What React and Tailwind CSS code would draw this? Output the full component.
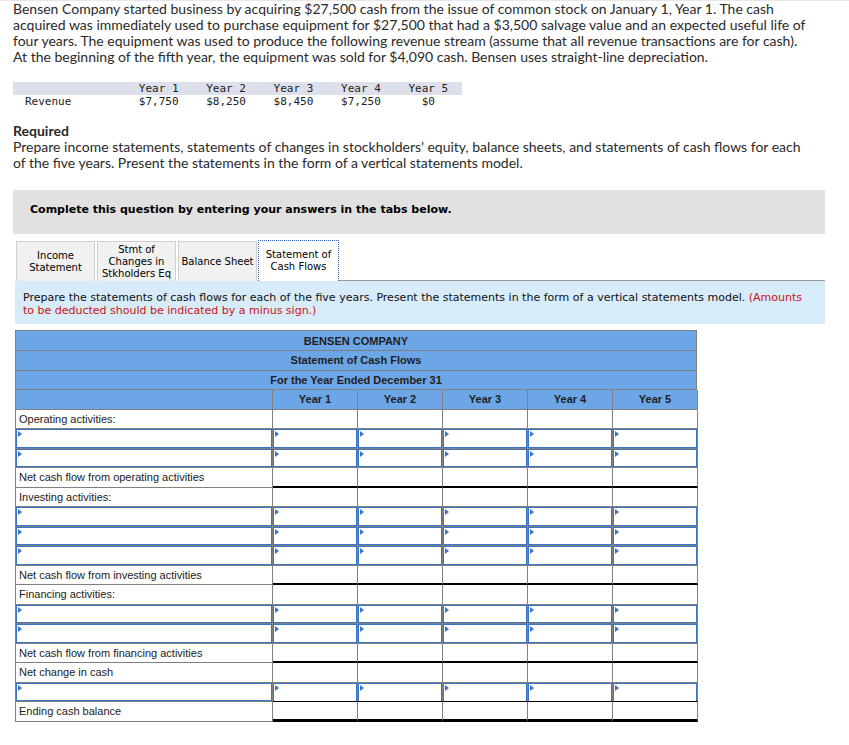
import React from "react";

const YEARS = ["Year 1", "Year 2", "Year 3", "Year 4", "Year 5"];

function Tri() {
  return (
    <span className="absolute left-[1px] top-[1px] w-0 h-0 border-y-[3px] border-y-transparent border-l-[4px] border-l-[#3b74c6]" />
  );
}

function InputBox({ extra = "" }) {
  return (
    <div className={`relative h-full border-[1.5px] border-[#3b74c6] ${extra}`}>
      <Tri />
    </div>
  );
}

const ROW = "grid grid-cols-[257px_repeat(5,85px)] h-[19.5px]";
const CELL = "border-r border-b border-[#808080] h-full";

function LabelRow({ label, total = null }) {
  return (
    <div className={ROW}>
      <div className={`${CELL} pl-[3px] flex items-center text-[11px] text-[#222]`}>{label}</div>
      {YEARS.map((y) => (
        <div
          key={y}
          className={
            total === "single"
              ? "border-r border-[#808080] border-b-2 border-b-black h-full"
              : total === "double"
              ? "border-r border-[#808080] border-b-[3px] border-b-black h-full"
              : CELL
          }
        />
      ))}
    </div>
  );
}

function InputRow({ blackBottom = false }) {
  return (
    <div className={ROW}>
      <div className={`${CELL} p-0`}>
        <InputBox />
      </div>
      {YEARS.map((y) => (
        <div
          key={y}
          className={
            blackBottom
              ? "border-r border-[#808080] border-b border-b-black h-full"
              : CELL
          }
        >
          <InputBox extra={blackBottom ? "border-b-0" : ""} />
        </div>
      ))}
    </div>
  );
}

export default function App() {
  return (
    <div className="w-[849px] min-h-[745px] bg-white border-t border-[#e6e6e6] text-[#222]">
      <div className="pl-[13px] pr-[20px]">
        <p className="text-[14px] leading-[16px] text-[#2a2a2a] font-['Lato',sans-serif]">
          Bensen Company started business by acquiring $27,500 cash from the issue of common stock on January 1, Year 1. The cash
          <br />
          acquired was immediately used to purchase equipment for $27,500 that had a $3,500 salvage value and an expected useful life of
          <br />
          four years. The equipment was used to produce the following revenue stream (assume that all revenue transactions are for cash).
          <br />
          At the beginning of the fifth year, the equipment was sold for $4,090 cash. Bensen uses straight-line depreciation.
        </p>

        <div className="mt-[17px] w-[449px] font-['DejaVu_Sans_Mono',monospace] text-[11px] leading-[13px] text-[#222]">
          <div className="grid grid-cols-[112px_repeat(5,1fr)] bg-[#dde0ea] h-[13px]">
            <div />
            {YEARS.map((y) => (
              <div key={y} className="text-center">{y}</div>
            ))}
          </div>
          <div className="grid grid-cols-[112px_repeat(5,1fr)] h-[13px]">
            <div className="pl-[12px]">Revenue</div>
            {["$7,750", "$8,250", "$8,450", "$7,250", "$0"].map((v, i) => (
              <div key={i} className="text-center">{v}</div>
            ))}
          </div>
        </div>

        <div className="mt-[15px] text-[14px] leading-[16px] text-[#2a2a2a] font-['Lato',sans-serif]">
          <div className="font-bold">Required</div>
          <div>
            Prepare income statements, statements of changes in stockholders’ equity, balance sheets, and statements of cash flows for each
            <br />
            of the five years. Present the statements in the form of a vertical statements model.
          </div>
        </div>

        <div className="mt-[19px] w-[812px] h-[44px] bg-[#e1e1e1] pl-[17px] pt-[13px] font-['DejaVu_Sans',sans-serif] font-bold text-[11px] leading-[13px] text-black">
          Complete this question by entering your answers in the tabs below.
        </div>
      </div>

      <div className="pl-[15px] mt-[6px] font-['DejaVu_Sans',sans-serif] text-[10px] leading-[12px] text-black">
        <div className="flex items-end w-[810px] h-[41px]">
          <div className="ml-[1px] w-[79px] h-[40px] bg-[#f1f1f1] border border-b-0 border-[#cfcfcf] flex items-center justify-center text-center">
            Income<br />Statement
          </div>
          <div className="ml-[2px] w-[79px] h-[40px] bg-[#f1f1f1] border border-b-0 border-[#cfcfcf] flex items-center justify-center text-center">
            Stmt of<br />Changes in<br />Stkholders Eq
          </div>
          <div className="ml-[2px] w-[79px] h-[40px] bg-[#f1f1f1] border border-b-0 border-[#cfcfcf] flex items-center justify-center text-center whitespace-nowrap">
            Balance Sheet
          </div>
          <div className="ml-[1px] w-[81px] h-[41px] bg-white border border-dotted border-b-0 border-[#2f5fb3] flex items-center justify-center text-center">
            Statement of<br />Cash Flows
          </div>
          <div className="flex-1 h-full border-b border-[#9a9a9a]" />
        </div>
        <div className="w-[810px] h-[43px] bg-[#d7ebf9] pl-[8px] pt-[10px] text-[11px] leading-[13px] text-[#111] whitespace-nowrap">
          Prepare the statements of cash flows for each of the five years. Present the statements in the form of a vertical statements model.{" "}
          <span className="text-[#cc1111]">
            (Amounts
            <br />
            to be deducted should be indicated by a minus sign.)
          </span>
        </div>

        <div className="mt-[6px] w-[682px] border-l border-t border-[#808080] font-['Liberation_Sans',Arial,sans-serif] text-[11px]">
          <div className="h-[20px] bg-[#6ca6e6] border-r border-b border-[#808080] flex items-center justify-center font-bold text-[#1e1e1e]">
            BENSEN COMPANY
          </div>
          <div className="h-[19.5px] bg-[#6ca6e6] border-r border-b border-[#808080] flex items-center justify-center font-bold text-[#1e1e1e]">
            Statement of Cash Flows
          </div>
          <div className="h-[19.5px] bg-[#6ca6e6] border-r border-b border-[#808080] flex items-center justify-center font-bold text-[#1e1e1e]">
            For the Year Ended December 31
          </div>
          <div className={`${ROW} bg-[#6ca6e6]`}>
            <div className={CELL} />
            {YEARS.map((y) => (
              <div key={y} className={`${CELL} flex items-center justify-center font-bold text-[#1e1e1e]`}>
                {y}
              </div>
            ))}
          </div>

          <LabelRow label="Operating activities:" />
          <InputRow />
          <InputRow />
          <LabelRow label="Net cash flow from operating activities" total="single" />
          <LabelRow label="Investing activities:" />
          <InputRow />
          <InputRow />
          <InputRow />
          <LabelRow label="Net cash flow from investing activities" total="single" />
          <LabelRow label="Financing activities:" />
          <InputRow />
          <InputRow />
          <LabelRow label="Net cash flow from financing activities" total="single" />
          <LabelRow label="Net change in cash" />
          <InputRow blackBottom />
          <LabelRow label="Ending cash balance" total="double" />
        </div>
      </div>
    </div>
  );
}
